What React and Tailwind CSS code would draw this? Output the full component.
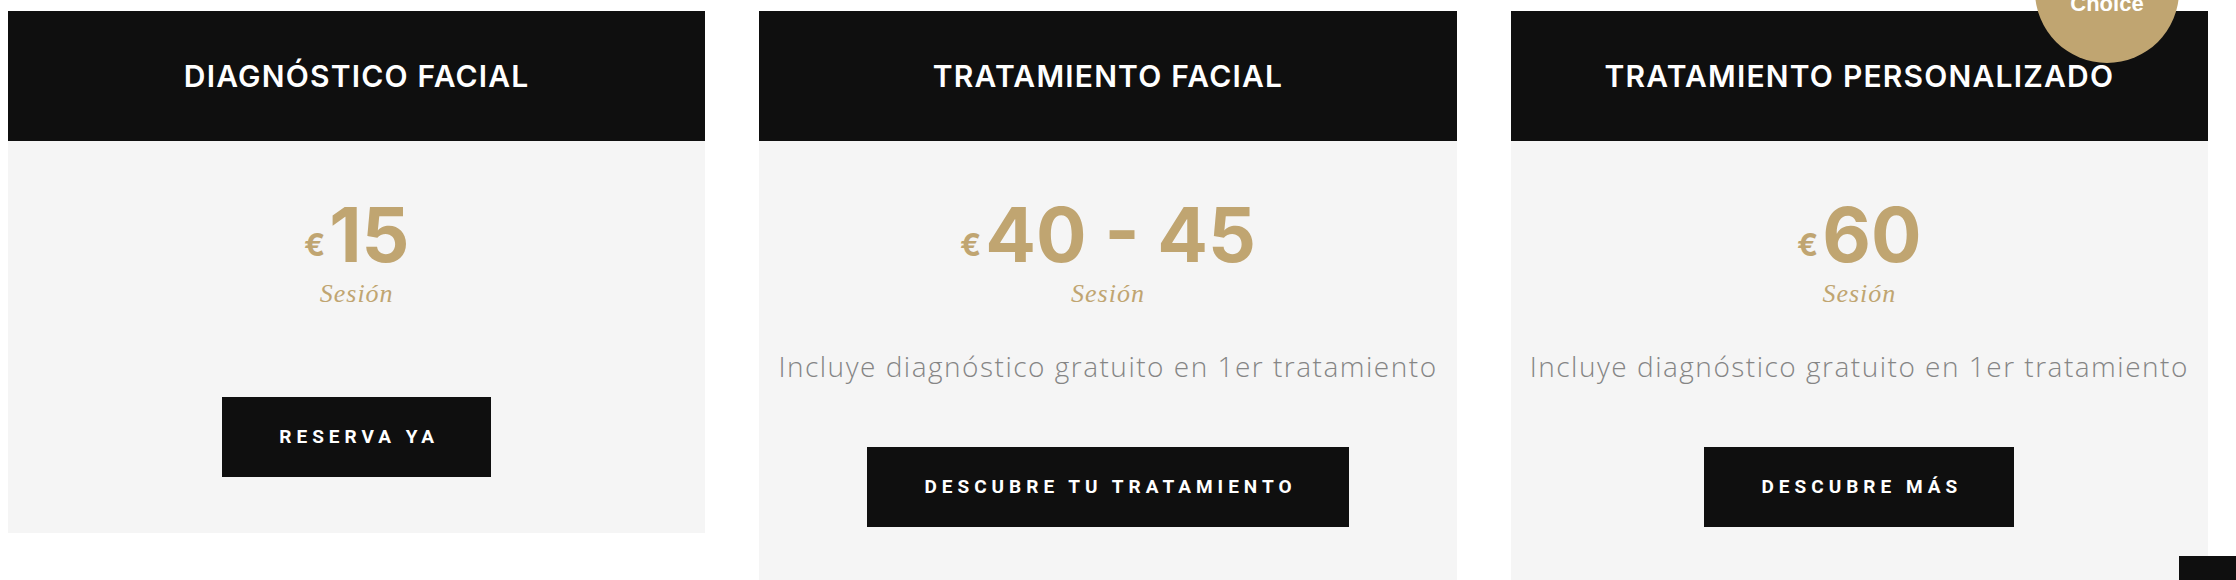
const plans = [
    {
        title: "DIAGNÓSTICO FACIAL",
        price: "15",
        desc: null,
        cta: "RESERVA YA",
    },
    {
        title: "TRATAMIENTO FACIAL",
        price: "40 - 45",
        desc: "Incluye diagnóstico gratuito en 1er tratamiento",
        cta: "DESCUBRE TU TRATAMIENTO",
    },
    {
        title: "TRATAMIENTO PERSONALIZADO",
        price: "60",
        desc: "Incluye diagnóstico gratuito en 1er tratamiento",
        cta: "DESCUBRE MÁS",
        badge: true,
    },
];

function PriceCard({ plan }) {
    return (
        <div className="relative bg-[#f5f5f5]">
            <div className="h-[130px] bg-[#0f0f0f] flex items-center justify-center">
                <h3 className="text-white text-[30px] font-semibold tracking-[1.2px] whitespace-nowrap leading-none font-['Inter',sans-serif]">
                    {plan.title}
                </h3>
            </div>

            <div className="flex flex-col items-center pt-[56px] pb-[56px]">
                <div className="flex items-baseline leading-none text-[#c0a571] font-bold font-['Inter',sans-serif]">
                    <span className="text-[31px] relative bottom-[6px]">€</span>
                    <span className="text-[75px] ml-[4px]">{plan.price}</span>
                </div>
                <p className="mt-[9px] text-[26px] leading-none italic tracking-[1px] text-[#c0a571] font-['Liberation_Serif',serif]">
                    Sesión
                </p>

                {plan.desc && (
                    <p className="mt-[45px] text-[28px] leading-none font-light tracking-[1.5px] text-[#858585] whitespace-nowrap font-['Open_Sans',sans-serif]">
                        {plan.desc}
                    </p>
                )}

                <a
                    href="#"
                    className={
                        plan.desc
                            ? "mt-[67px] h-[80px] pl-[57px] pr-[52px] flex items-center bg-[#0f0f0f] text-white text-[19px] font-bold tracking-[5px] font-['Roboto',sans-serif]"
                            : "mt-[90px] h-[80px] pl-[57px] pr-[52px] flex items-center bg-[#0f0f0f] text-white text-[19px] font-bold tracking-[5px] font-['Roboto',sans-serif]"
                    }
                >
                    {plan.cta}
                </a>
            </div>

            {plan.badge && (
                <div className="absolute right-[29px] -top-[92px] w-[144px] h-[144px] rounded-full bg-[#c0a571] flex flex-col items-center justify-center text-white font-bold text-[22px] leading-[26px] font-['Liberation_Sans',sans-serif]">
                    <span>Best</span>
                    <span>Choice</span>
                </div>
            )}
        </div>
    );
}

export default function App() {
    return (
        <div className="min-h-screen bg-white">
            <section className="grid grid-cols-3 gap-x-[54px] items-start pt-[11px] pl-[8px] pr-[28px]">
                {plans.map((p) => (
                    <PriceCard key={p.title} plan={p} />
                ))}
            </section>

            <a href="#" className="fixed right-0 top-[556px] w-[57px] h-[57px] bg-[#0f0f0f]"></a>
        </div>
    );
}
